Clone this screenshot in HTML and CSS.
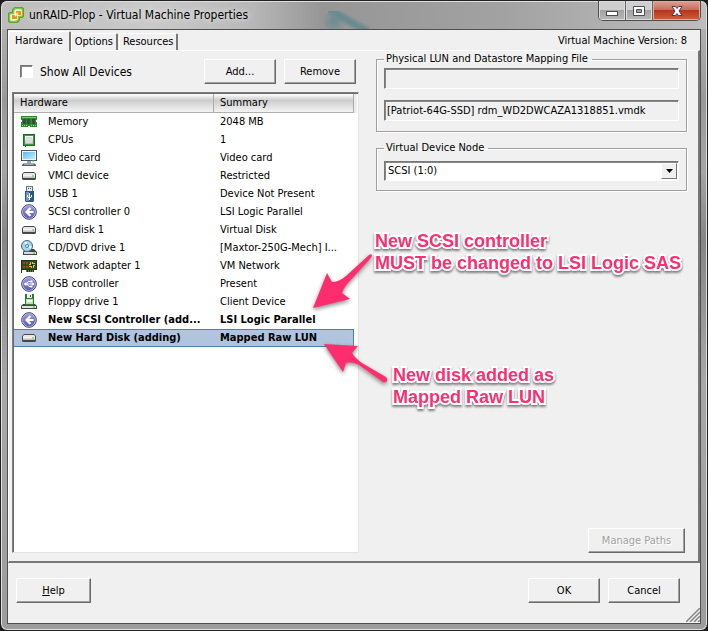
FILE: index.html
```html
<!DOCTYPE html>
<html lang="en">
<head>
<meta charset="utf-8">
<title>unRAID-Plop - Virtual Machine Properties</title>
<link rel="stylesheet" href="styles.css">
</head>
<body>
<svg class="defs" aria-hidden="true">
  <defs>
    <linearGradient id="purple" x1="0" y1="0" x2="0" y2="1"><stop offset="0" stop-color="#9a9ae6"/><stop offset="1" stop-color="#5a5ab8"/></linearGradient>
    <linearGradient id="metal" x1="0" y1="0" x2="0" y2="1"><stop offset="0" stop-color="#fff"/><stop offset="1" stop-color="#b8b8b8"/></linearGradient>
    <linearGradient id="screen" x1="0" y1="0" x2="1" y2="1"><stop offset="0" stop-color="#58b8f4"/><stop offset="1" stop-color="#c8f0ff"/></linearGradient>
    <symbol id="i-memory" viewBox="0 0 16 16">
      <path d="M0 2h16v4h-1v2h1v5H9v-1H7v1H0V8h1V6H0z" fill="#2b8a2b"/><path d="M1 3h14v1H1z" fill="#7cc67c"/>
      <path d="M2 5h3v5H2zM6 5h3v5H6zM11 5h3v5h-3z" fill="#3c4a40"/><path d="M1 11.500h5M10 11.500h5" stroke="#d8c868" stroke-dasharray="1 1"/>
    </symbol>
    <symbol id="i-cpu" viewBox="0 0 16 16">
      <path d="M2 2h12v12H5v1H4v-1H2z" fill="#1c6b22"/><path d="M3 3h10v10H3z" fill="#3b9a3f"/><path d="M4 4h8v8H4z" fill="url(#metal)"/><path d="M5 5h6v6H5z" fill="#dcdcdc"/>
    </symbol>
    <symbol id="i-video" viewBox="0 0 16 16">
      <path d="M0 0h16v11H0z" fill="#4b5560"/><path d="M1 1h14v9H1z" fill="#eef6fa"/><path d="M2 2h12v7H2z" fill="url(#screen)"/>
      <path d="M6 11h4v2H6z" fill="#9aa2aa"/><path d="M3 13h10l2 2v1H1v-1z" fill="#555f68"/><path d="M3 14h10" stroke="#e8eef0"/><path d="M11 11h2" stroke="#3c3"/>
    </symbol>
    <symbol id="i-disk" viewBox="0 0 16 16">
      <path d="M3 4h10l2 2v5l-1 1H2l-1-1V6z" fill="#484848"/><path d="M3 5h10l1 1v1H2V6z" fill="#e8e8e8"/><path d="M2 7h12v3H2z" fill="url(#metal)"/><path d="M11 8h2" stroke="#2bd02b"/>
    </symbol>
    <symbol id="i-usb" viewBox="0 0 16 16">
      <path d="M5 0h7v5H5z" fill="#68747e"/><path d="M6 1h5v4H6z" fill="#e4eaee"/><path d="M7 2h1v1H7zM9 2h1v1H9z" fill="#556"/><path d="M4 5h9v10l-1 1H5l-1-1z" fill="#2d5680"/><path d="M5 6h3v9H5z" fill="#6b98c2"/>
      <path d="M8.500 7v7M6.500 9v2l2 1 2-1V9" fill="none" stroke="#fff"/>
    </symbol>
    <symbol id="i-scsi" viewBox="0 0 16 16">
      <circle cx="8" cy="8" r="7.300" fill="#d8d8f0" stroke="#3c3c58"/><circle cx="8" cy="8" r="6.200" fill="url(#purple)"/>
      <path d="M9.500 4 5.500 8l4 4" fill="none" stroke="#fff" stroke-width="2.200"/><path d="M6 8h6.500" stroke="#fff" stroke-width="2"/>
    </symbol>
    <symbol id="i-usbctl" viewBox="0 0 16 16">
      <circle cx="8" cy="8" r="7.300" fill="#d8d8f0" stroke="#3c3c58"/><circle cx="8" cy="8" r="6.200" fill="url(#purple)"/>
      <path d="M3.500 8h9M5 8l2.500-2.500H10M6 8l2 2.500h2" fill="none" stroke="#fff"/><path d="M5.500 6v4L2.500 8z" fill="#fff"/><circle cx="12" cy="8" r="1.200" fill="#fff"/><path d="M9.500 4.500h2v2h-2zM9.500 9.500h2v2h-2z" fill="#fff"/>
    </symbol>
    <symbol id="i-cd" viewBox="0 0 16 16">
      <path d="M4 9h9l3 3v3H2v-3z" fill="#444"/><path d="M3 12h12v2H3z" fill="#ddd"/><path d="M12 13h2" stroke="#2bc02b"/>
      <circle cx="6" cy="6" r="5.500" fill="#a9d4ef" stroke="#38668a"/><path d="M6 6 3 2.500 6 1.500zM6 6l4 3 .5-3z" fill="#effaff"/><circle cx="6" cy="6" r="1.500" fill="#fff" stroke="#4a7898"/>
    </symbol>
    <symbol id="i-net" viewBox="0 0 16 16">
      <path d="M0 2h16v10h-3v2H5v-2H1v3H0z" fill="#25331c"/><path d="M1 3h14v8H1z" fill="#24551c"/>
      <path d="M2 4h2v2H2zM5 4h2v2H5zM2 8h2v2H2zM5 8h2v2H5z" fill="#c8321c"/><path d="M9 5h4v4H9z" fill="none" stroke="#f0c020" stroke-dasharray="1 1" stroke-width="2"/><path d="M10 6h2v2h-2z" fill="#222"/><path d="M5 13h8" stroke="#e0bb38" stroke-dasharray="1 1"/>
    </symbol>
    <symbol id="i-floppy" viewBox="0 0 16 16">
      <path d="M2 10h12l2 2v3H0v-3z" fill="#444"/><path d="M1 12h14v2H1z" fill="#e2e2e2"/><path d="M4 0h9v11H4z" fill="#2c7d2c"/><path d="M6 0h5v4H6z" fill="#eee"/><path d="M9 1h1v2H9z" fill="#285c28"/><path d="M5 5h7v5H5z" fill="#b7e4b7"/><path d="M6 7h5" stroke="#fff" stroke-width="2"/><path d="M12 13h2" stroke="#2b2"/>
    </symbol>
  </defs>
</svg>

<div class="window">
  <header class="titlebar">
    <svg class="logo" viewBox="0 0 16 16" aria-hidden="true">
      <path d="M7 1h7l1 1v7l-1 1h-3v3l-2 2H2l-1-1V7l1-1h3V3z" fill="#f4f4e4" stroke="#5c9a1c" stroke-width="2" stroke-linejoin="round"/>
      <path d="M7 1.500h6.500l1 1v6l-1 1h-3v3l-2 2h-6l-1-1V7.500l1-1h3v-3z" fill="none" stroke="#86c434" stroke-width="1.500" stroke-linejoin="round"/>
      <path d="M8 4h5v4H9v4H4V8h4z" fill="#e8951c"/><path d="m7 9 3-3" stroke="#ffe9a0" stroke-width="2"/>
    </svg>
    <h1>unRAID-Plop - Virtual Machine Properties</h1>
    <div class="controls">
      <button type="button" aria-label="Minimize"><svg viewBox="0 0 14 12"><rect x="1.500" y="6.500" width="11" height="4" fill="#fff" stroke="#4a4a58"/></svg></button>
      <button type="button" aria-label="Maximize"><svg viewBox="0 0 14 12"><path d="M1.500 1.500h11v9h-11zM4.500 4.500v3h5v-3z" fill="#fff" fill-rule="evenodd" stroke="#4a4a58"/></svg></button>
      <button type="button" class="close" aria-label="Close"><svg viewBox="0 0 14 12"><path d="M2 1.500h3.500L7 3.500l1.500-2H12L9 6l3 4.500H8.500L7 8.500l-1.500 2H2L5 6z" fill="#fff" stroke="#54364a"/></svg></button>
    </div>
  </header>

  <main class="client">
    <div class="tabrow">
      <div class="tabs" role="tablist">
        <button type="button" role="tab" aria-selected="true">Hardware</button>
        <button type="button" role="tab" aria-selected="false">Options</button>
        <button type="button" role="tab" aria-selected="false">Resources</button>
      </div>
      <span class="version">Virtual Machine Version: 8</span>
    </div>

    <section class="panel">
      <div class="devices">
        <div class="toolbar">
          <label class="check"><input type="checkbox"><span>Show All Devices</span></label>
          <button type="button" class="btn">Add...</button>
          <button type="button" class="btn">Remove</button>
        </div>
        <div class="list">
          <table>
            <thead><tr><th scope="col" class="name">Hardware</th><th scope="col">Summary</th></tr></thead>
            <tbody>
              <tr><td><svg><use href="#i-memory"/></svg>Memory</td><td>2048 MB</td></tr>
              <tr><td><svg><use href="#i-cpu"/></svg>CPUs</td><td>1</td></tr>
              <tr><td><svg><use href="#i-video"/></svg>Video card</td><td>Video card</td></tr>
              <tr><td><svg><use href="#i-disk"/></svg>VMCI device</td><td>Restricted</td></tr>
              <tr><td><svg><use href="#i-usb"/></svg>USB 1</td><td>Device Not Present</td></tr>
              <tr><td><svg><use href="#i-scsi"/></svg>SCSI controller 0</td><td>LSI Logic Parallel</td></tr>
              <tr><td><svg><use href="#i-disk"/></svg>Hard disk 1</td><td>Virtual Disk</td></tr>
              <tr><td><svg><use href="#i-cd"/></svg>CD/DVD drive 1</td><td>[Maxtor-250G-Mech] I...</td></tr>
              <tr><td><svg><use href="#i-net"/></svg>Network adapter 1</td><td>VM Network</td></tr>
              <tr><td><svg><use href="#i-usbctl"/></svg>USB controller</td><td>Present</td></tr>
              <tr><td><svg><use href="#i-floppy"/></svg>Floppy drive 1</td><td>Client Device</td></tr>
              <tr class="new"><td><svg><use href="#i-scsi"/></svg>New SCSI Controller (add...</td><td>LSI Logic Parallel</td></tr>
              <tr class="new selected"><td><svg><use href="#i-disk"/></svg>New Hard Disk (adding)</td><td>Mapped Raw LUN</td></tr>
            </tbody>
          </table>
        </div>
      </div>

      <div class="details">
        <fieldset class="mapping">
          <legend>Physical LUN and Datastore Mapping File</legend>
          <input type="text" readonly aria-label="Physical LUN">
          <input type="text" readonly aria-label="Datastore mapping file" value="[Patriot-64G-SSD] rdm_WD2DWCAZA1318851.vmdk">
        </fieldset>
        <fieldset class="node">
          <legend>Virtual Device Node</legend>
          <div class="combo">
            <select aria-label="Virtual Device Node"><option>SCSI (1:0)</option></select>
            <span class="drop"><svg viewBox="0 0 7 4"><path d="M0 0h7L3.500 4z"/></svg></span>
          </div>
        </fieldset>
        <button type="button" class="btn manage" disabled>Manage Paths</button>
      </div>
    </section>

    <footer class="actions">
      <button type="button" class="btn help"><u>H</u>elp</button>
      <button type="button" class="btn">OK</button>
      <button type="button" class="btn">Cancel</button>
      <svg class="grip" viewBox="0 0 14 14" aria-hidden="true"><path d="M0 14 14 0M4 14 14 4M8 14l6-6M12 14l2-2" stroke="#858585" stroke-width="1.500"/></svg>
    </footer>
  </main>

  <svg class="arrows" viewBox="0 0 80 140" aria-hidden="true">
    <path d="M3 58 17 23l5 9q7 0 14-6L59 5q3-2 3 1-1 2-3 4L37 34q-4 5-5 9l8 6z"/>
    <path d="m14 94 34 2-6 7q3 5 10 10l24 14q2 2 1 4t-4 1L49 115q-7-4-13-2l-3 9z"/>
  </svg>
  <p class="note note-controller">New SCSI controller<br>MUST be changed to LSI Logic SAS</p>
  <p class="note note-disk">New disk added as<br>Mapped Raw LUN</p>
</div>
</body>
</html>
```
FILE: styles.css
```css
* { box-sizing: border-box; }

body {
  margin: 0;
  background: #1c1c1c;
  color: #000;
  font: 11px/14px "DejaVu Sans Condensed", "DejaVu Sans", sans-serif;
}

button, input, select { font: inherit; color: inherit; }

.defs { position: absolute; width: 0; height: 0; }

.window {
  position: relative;
  display: flex;
  flex-direction: column;
  min-height: 100vh;
  padding: 0 6px 6px;
  border: 1px solid #222;
  border-radius: 7px;
  background: linear-gradient(#b8b8b8, #999 100px, #a5a5a5 170px, #858585 240px, #a8a8a8 380px, #9c9c9c);
  box-shadow: inset 0 0 0 1px #e0e0e0;
}

/* Title bar */
.titlebar {
  display: flex;
  align-items: center;
  gap: 5px;
  height: 28px;
  margin: 0 -5px;
  padding: 0 5px 0 6px;
  border-radius: 6px 6px 0 0;
  background:
    radial-gradient(circle at 50% 60%, #6b8b91, #6b8b9100 70%) 320px 7px / 24px 22px no-repeat,
    linear-gradient(30deg, transparent 34%, #6b8b91 46%, #6b8b91 54%, transparent 66%) 326px 10px / 42px 20px no-repeat,
    linear-gradient(90deg, #bcbcbc, #cacaca 150px, #b8b8b8 250px, #969696 320px, #a2a2a2 500px, #bdbdbd);
  box-shadow: inset 0 1px #dedede;
}
.logo { width: 16px; height: 16px; }
.titlebar h1 {
  flex: 1;
  margin: 0;
  font: 12px/16px "DejaVu Sans Condensed", "DejaVu Sans", sans-serif;
  text-shadow: 0 0 6px #fff;
}
.controls {
  display: flex;
  align-self: flex-start;
  border: 1px solid #4e4e4e;
  border-top: 0;
  border-radius: 0 0 5px 5px;
  overflow: hidden;
}
.controls button {
  width: 27px;
  height: 19px;
  padding: 0;
  border: 0;
  border-right: 1px solid #666;
  background: linear-gradient(#cfcfcf 45%, #a2a2a2 50%, #b8b8b8);
  box-shadow: inset 0 0 0 1px #dcdcdc;
}
.controls .close {
  width: 47px;
  border-right: 0;
  background: linear-gradient(#dba193, #cb6e5b 45%, #b8341b 50%, #d0603a);
  box-shadow: inset 0 0 0 1px #e3aa9b;
}
.controls svg { display: block; width: 14px; height: 12px; margin: 0 auto; }

/* Client area */
.client {
  flex: 1;
  display: flex;
  flex-direction: column;
  border: 1px solid #505050;
  background: #f0f0f0;
}
.tabrow { display: flex; justify-content: space-between; height: 20px; }
.tabs { display: flex; align-items: flex-end; }
.tabs button {
  height: 17px;
  margin-right: 1px;
  padding: 0 3px;
  border: 1px solid #fff;
  border-right: 2px solid #777;
  border-bottom: 0;
  border-radius: 2px 2px 0 0;
  background: #f0f0f0;
}
.tabs button[aria-selected="true"] {
  position: relative;
  height: 20px;
  margin: 0 0 -1px;
  padding: 0 6px 2px;
}
.version { padding: 4px 13px 0 0; }

.panel {
  flex: 1;
  display: flex;
  gap: 17px;
  padding: 8px 11px 8px 3px;
  border: 1px solid #fff;
  border-right: 2px solid #777;
  border-bottom: 2px solid #777;
}
.devices { flex: 0 1 347px; display: flex; flex-direction: column; }
.toolbar { display: flex; gap: 8px; padding: 0 3px 8px 8px; }
.check { flex: 1; display: flex; align-items: center; gap: 7px; font-size: 12px; }
.check input {
  appearance: none;
  width: 13px;
  height: 13px;
  margin: 0;
  border: 1px solid;
  border-color: #777 #fff #fff #777;
  background: #fff;
  box-shadow: inset 1px 1px #888;
}
.btn {
  width: 72px;
  height: 25px;
  padding: 0;
  border: 1px solid;
  border-color: #fff #696969 #696969 #fff;
  background: #f0f0f0;
  box-shadow: inset -1px -1px #a0a0a0;
}
.btn:disabled { color: #a0a0a0; text-shadow: 1px 1px #fff; }

/* Device list */
.list {
  flex: 1;
  padding: 1px 4px 0 1px;
  border: 1px solid;
  border-color: #808080 #e3e3e3 #e3e3e3 #808080;
  background: #fff;
  box-shadow: inset 1px 1px #696969;
}
table { width: 100%; border-collapse: separate; border-spacing: 0; table-layout: fixed; }
th {
  height: 19px;
  padding: 0 6px;
  border-right: 1px solid #aaa;
  border-bottom: 1px solid #b0b0b0;
  background: linear-gradient(#fff, #ccc 35%, #f4f4f4);
  font-weight: 400;
  text-align: left;
}
th.name { width: 200px; }
th:last-child { box-shadow: 3px 0 #ececec; }
td {
  height: 18px;
  padding: 0 6px;
  border: 0 solid #4682b4;
  overflow: hidden;
  white-space: nowrap;
}
td svg { width: 16px; height: 16px; margin: 0 11px 0 1px; vertical-align: middle; }
.new { font-weight: 700; }
.selected td { border-width: 1px 0; background: #b0c4de; }
.selected td:last-child { border-right-width: 1px; }

/* Detail column */
.details { flex: 1; display: flex; flex-direction: column; min-width: 0; }
fieldset {
  min-width: 0;
  margin: 0 0 9px;
  padding: 0 7px;
  border: 1px solid #a0a0a0;
  box-shadow: inset 1px 1px #fff, 1px 1px #fff;
}
legend { margin-left: 0; padding: 0 4px 0 2px; }
.mapping { height: 80px; margin-top: -7px; }
.mapping input {
  display: block;
  width: 100%;
  height: 21px;
  margin: 2px 0 11px;
  padding: 0 2px;
  border: 1px solid;
  border-color: #777 #fff #fff #777;
  background: #f0f0f0;
  box-shadow: inset 1px 1px #888;
}
.node { height: 50px; }
.combo { display: flex; position: relative; margin-top: 6px; }
.combo select {
  appearance: none;
  width: 100%;
  height: 20px;
  padding: 0 20px 0 3px;
  border: 1px solid;
  border-color: #777 #fff #fff #777;
  border-radius: 0;
  background: #fff;
  box-shadow: inset 1px 1px #888;
}
.drop {
  position: absolute;
  top: 2px;
  right: 2px;
  display: grid;
  place-items: center;
  width: 16px;
  height: 16px;
  border: 1px solid;
  border-color: #fff #777 #777 #fff;
  background: #f0f0f0;
  pointer-events: none;
}
.drop svg { width: 7px; height: 4px; }
.manage { width: 97px; margin: auto 2px 0 auto; }

.actions {
  position: relative;
  display: flex;
  gap: 8px;
  height: 60px;
  padding: 15px 20px 0 8px;
}
.help { width: 75px; margin-right: auto; }
.grip { position: absolute; right: 0; bottom: 1px; width: 14px; height: 14px; }

/* Annotations over the dialog */
.arrows {
  position: absolute;
  top: 249px;
  left: 309px;
  width: 80px;
  height: 140px;
  fill: #ff2d6e;
  filter: drop-shadow(0 2px 2px #0007);
}
.note {
  position: absolute;
  margin: 0;
  color: #ff2d6e;
  font: 700 18px/22px "Liberation Sans", sans-serif;
  white-space: nowrap;
  -webkit-text-stroke: 4px #fff;
  paint-order: stroke fill;
  filter: drop-shadow(0 2px 1px #0007);
}
.note-controller { top: 229px; left: 374px; }
.note-disk { top: 363px; left: 392px; }
```
